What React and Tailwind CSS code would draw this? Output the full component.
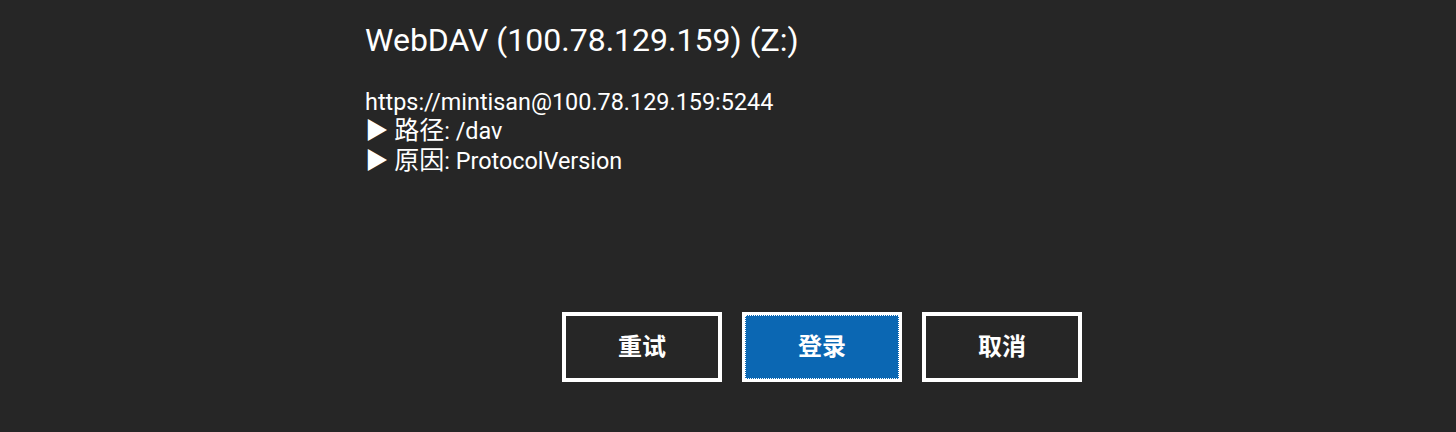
export default function App() {
  const cjk = { fontFamily: 'Roboto, "Noto Sans CJK SC", sans-serif' };
  return (
    <div className="w-[1456px] h-[432px] bg-[#262626] text-white overflow-hidden" style={cjk}>
      <div className="ml-[365px] w-[717px] flex flex-col">
        <div className="mt-[19px] text-[32px] leading-[42px]">WebDAV (100.78.129.159) (Z:)</div>
        <div className="mt-[27px] text-[23.4px] leading-[29px]">
          <div className="h-[29px]">https://mintisan@100.78.129.159:5244</div>
          <div className="h-[29px]">▶ <span className="text-[25px] leading-none">路径</span>: /dav</div>
          <div className="h-[29px] mt-[1px]">▶ <span className="text-[25px] leading-none">原因</span>: ProtocolVersion</div>
        </div>
        <div className="mt-[136px] flex justify-end gap-[20px]">
          <button className="w-[160px] h-[70px] border-4 border-white bg-[#262626] text-[24px] font-bold text-white">重试</button>
          <button className="w-[160px] h-[70px] border-[3px] border-white bg-[#0b67b3] text-[24px] font-bold text-white p-0">
            <span className="flex w-full h-full items-center justify-center border border-dotted border-white">登录</span>
          </button>
          <button className="w-[160px] h-[70px] border-4 border-white bg-[#262626] text-[24px] font-bold text-white">取消</button>
        </div>
      </div>
    </div>
  );
}
